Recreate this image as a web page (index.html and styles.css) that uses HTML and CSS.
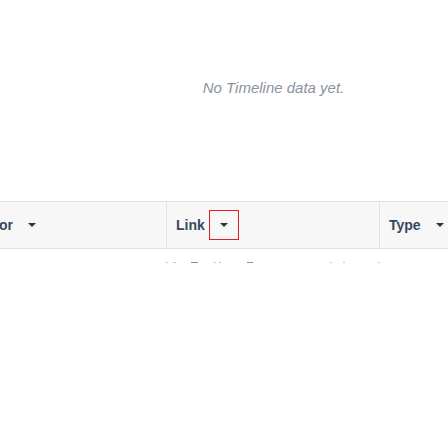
FILE: index.html
```html
<!DOCTYPE html>
<html>
<head>
<meta charset="utf-8">
<link rel="stylesheet" href="styles.css">
</head>
<body>
<div class="empty">No Timeline data yet.</div>
<div class="table-wrap">
  <div class="table">
    <div class="head-row">
      <div class="th col-a"><span class="label">Author</span><span class="sort"><span class="tri"></span></span></div>
      <div class="th col-b"><span class="label">Link</span><span class="sort focused"><span class="tri"></span></span></div>
      <div class="th col-c"><span class="label">Type</span><span class="sort"><span class="tri"></span></span></div>
    </div>
    <div class="body-row">
      <span class="mark m1"></span><span class="mark m2"></span><span class="mark m3 dark"></span>
      <span class="mark m4"></span><span class="mark m5"></span><span class="mark m6 dark"></span>
      <span class="mark m7"></span><span class="mark m8"></span><span class="mark m9"></span>
    </div>
  </div>
</div>
</body>
</html>
```

FILE: styles.css
```css
html, body {
  margin: 0;
  padding: 0;
  background: #ffffff;
  font-family: "Liberation Sans", Arial, sans-serif;
}

.empty {
  padding: 79px 0 0 99px;
  height: 201px;
  box-sizing: border-box;
  text-align: center;
  font-style: italic;
  font-size: 15px;
  color: #8a929c;
}

.table-wrap {
  overflow: hidden;
  width: 448px;
}

.table {
  margin-left: -42px;
  width: 560px;
}

.head-row {
  display: flex;
  height: 48px;
  box-sizing: border-box;
  background: #f7f7f7;
  border-top: 1px solid #e3e3e3;
  border-bottom: 1px solid #e3e3e3;
}

.th {
  display: flex;
  align-items: center;
  padding-left: 9px;
  box-sizing: border-box;
  font-weight: bold;
  font-size: 14px;
  color: #35495e;
}

.col-a { width: 208px; }
.col-b { width: 213px; border-left: 1px solid #e3e3e3; }
.col-c { flex: 1; border-left: 1px solid #e3e3e3; }

.sort {
  display: flex;
  align-items: center;
  justify-content: center;
  width: 30px;
  height: 30px;
  margin-left: 4px;
  box-sizing: border-box;
}

.sort.focused {
  border: 1px solid #e02020;
}

.tri {
  width: 0;
  height: 0;
  border-left: 4px solid transparent;
  border-right: 4px solid transparent;
  border-top: 4px solid #333;
}

.body-row {
  position: relative;
  height: 30px;
}

.mark {
  position: absolute;
  top: 13px;
  height: 1px;
  background: #c9c4cc;
}
.mark.dark { background: #8f8f8f; }
.m1 { left: 208px; width: 2px; }
.m2 { left: 215px; width: 3px; }
.m3 { left: 233px; width: 7px; }
.m4 { left: 256px; width: 2px; }
.m5 { left: 261px; width: 2px; }
.m6 { left: 289px; width: 6px; }
.m7 { left: 372px; width: 2px; }
.m8 { left: 385px; width: 2px; }
.m9 { left: 420px; width: 2px; }
```
